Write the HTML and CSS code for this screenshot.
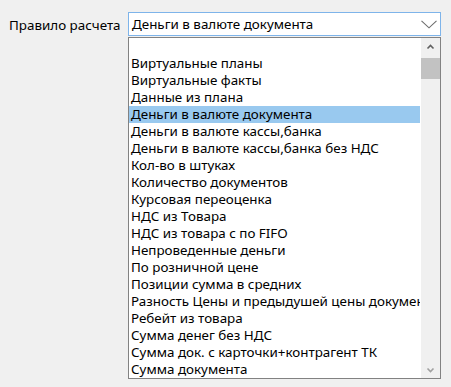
FILE: index.html
```html
<!DOCTYPE html>
<html lang="ru">
<head>
    <meta charset="UTF-8">
    <meta name="viewport" content="width=device-width, initial-scale=1.0">
    <title>Правило расчета</title>
    <link rel="stylesheet" href="styles.css">
</head>
<body>
    <div class="field">
        <label class="field-label">Правило расчета</label>
        <div class="combo">
            <div class="combo-box">
                <span class="combo-value">Деньги в валюте документа</span>
                <svg class="combo-arrow" width="16" height="9" viewBox="0 0 16 9">
                    <path d="M0.5 0.8 L8 7.8 L15.5 0.8" fill="none" stroke="#6d6d6d" stroke-width="1.1"/>
                </svg>
            </div>
            <div class="combo-list">
                <div class="items">
                    <div class="item"></div>
                    <div class="item">Виртуальные планы</div>
                    <div class="item">Виртуальные факты</div>
                    <div class="item">Данные из плана</div>
                    <div class="item selected">Деньги в валюте документа</div>
                    <div class="item">Деньги в валюте кассы,банка</div>
                    <div class="item">Деньги в валюте кассы,банка без НДС</div>
                    <div class="item">Кол-во в штуках</div>
                    <div class="item">Количество документов</div>
                    <div class="item">Курсовая переоценка</div>
                    <div class="item">НДС из Товара</div>
                    <div class="item">НДС из товара с по FIFO</div>
                    <div class="item">Непроведенные деньги</div>
                    <div class="item">По розничной цене</div>
                    <div class="item">Позиции сумма в средних</div>
                    <div class="item">Разность Цены и предыдушей цены документа</div>
                    <div class="item">Ребейт из товара</div>
                    <div class="item">Сумма денег без НДС</div>
                    <div class="item">Сумма док. с карточки+контрагент ТК</div>
                    <div class="item">Сумма документа</div>
                </div>
                <div class="scrollbar">
                    <svg class="scroll-btn" width="19" height="17" viewBox="0 0 19 17">
                        <path d="M6.5 10.5 L9.5 7.5 L12.5 10.5" fill="none" stroke="#606060" stroke-width="1.6"/>
                    </svg>
                    <div class="thumb"></div>
                    <div class="track"></div>
                    <svg class="scroll-btn" width="19" height="17" viewBox="0 0 19 17">
                        <path d="M6.5 7.5 L9.5 10.5 L12.5 7.5" fill="none" stroke="#a0a0a0" stroke-width="1.6"/>
                    </svg>
                </div>
            </div>
        </div>
    </div>
</body>
</html>
```

FILE: styles.css
```css
body {
    margin: 0;
    padding: 0;
    background-color: #f0f0f0;
    font-family: "Noto Sans", Arial, sans-serif;
    font-size: 13.4px;
    color: #000;
}
.field {
    display: flex;
    align-items: flex-start;
    padding: 12px 0 0 9px;
}
.field-label {
    width: 119px;
    margin-top: 5px;
    line-height: 17px;
}
.combo {
    display: flex;
    flex-direction: column;
    width: 313px;
}
.combo-box {
    display: flex;
    align-items: center;
    justify-content: space-between;
    height: 22px;
    border: 1px solid #7eb4ea;
    background: #fff;
    padding: 0 3px 0 3px;
}
.combo-value {
    line-height: 17px;
}
.combo-arrow {
    margin-top: 1px;
}
.combo-list {
    display: flex;
    margin-top: 1px;
    height: 340px;
    border: 1px solid #828282;
    background: #fff;
    overflow: hidden;
}
.items {
    flex: 1;
    min-width: 0;
    padding-right: 1px;
}
.item {
    height: 17px;
    line-height: 17px;
    padding-left: 2px;
    white-space: nowrap;
    overflow: hidden;
}
.item.selected {
    background: #99c9ef;
}
.scrollbar {
    display: flex;
    flex-direction: column;
    width: 19px;
    background: #f0f0f0;
}
.scroll-btn {
    display: block;
    flex: none;
}
.thumb {
    height: 21px;
    margin: 3px 0 0;
    background: #c2c2c2;
}
.track {
    flex: 1;
}
```
